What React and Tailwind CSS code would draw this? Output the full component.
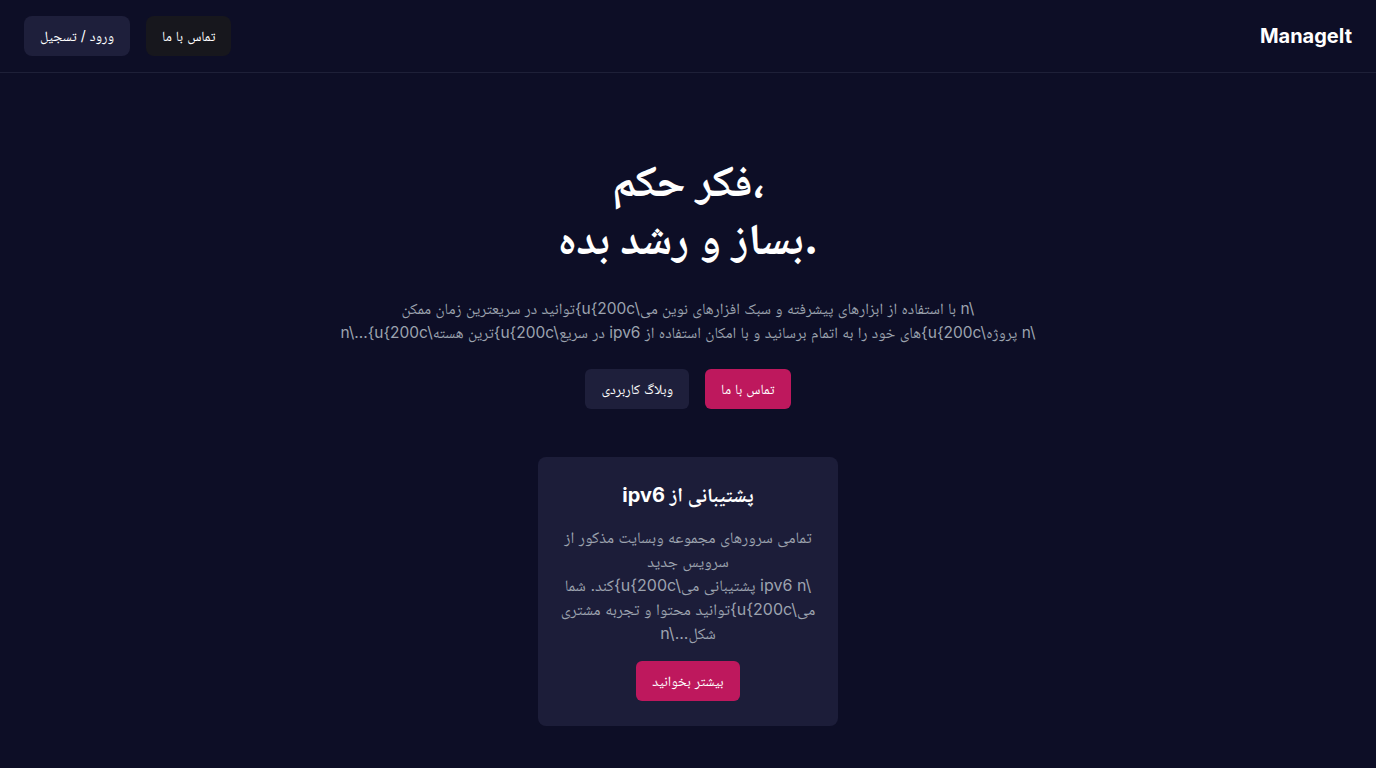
import React from "react";

const R = ({ children }) => <bdi dir="rtl">{children}</bdi>;
const L = ({ children }) => <bdi dir="ltr">{children}</bdi>;
const ESC = "{u{200c\\";

export default function App() {
  return (
    <div
      dir="rtl"
      className="min-h-screen bg-[#0d0e26] text-white font-['Inter','Noto_Naskh_Arabic',sans-serif]"
    >
      <header className="flex h-[73px] items-center justify-between border-b border-[#1e2038] px-6">
        <div className="text-xl font-bold">ManageIt</div>
        <div className="flex items-center gap-4">
          <button className="h-10 rounded-lg bg-[#17171d] px-4 text-sm leading-5 text-white">
            تماس با ما
          </button>
          <button className="h-10 rounded-lg bg-[#1e1f3b] px-4 text-sm leading-5 text-white">
            ورود / تسجیل
          </button>
        </div>
      </header>

      <main className="flex flex-col items-center pt-[78px] pb-10">
        <h1 dir="ltr" className="text-center text-[44px] font-bold leading-[58px]">
          <span className="block">فکر حکم،</span>
          <span className="block">بساز و رشد بده.</span>
        </h1>

        <div className="mt-[30px] text-center text-[15.5px] leading-6 text-[#9ca3af]">
          <div dir="ltr" className="whitespace-nowrap">
            <R>توانید در سریعترین زمان ممکن</R>
            <L>{ESC}</L>
            <R>با استفاده از ابزارهای پیشرفته و سبک افزارهای نوین می</R>{" "}
            <L>{"n\\"}</L>
          </div>
          <div dir="ltr" className="whitespace-nowrap">
            <L>{"n\\...{u{200c\\"}</L>
            <R>ترین هسته</R>
            <L>{ESC}</L>
            <R>در سریع</R> <L>ipv6</L>{" "}
            <R>های خود را به اتمام برسانید و با امکان استفاده از</R>
            <L>{ESC}</L>
            <R>پروژه</R> <L>{"n\\"}</L>
          </div>
        </div>

        <div className="mt-6 flex items-center gap-4">
          <button className="h-10 rounded-md bg-[#be185d] px-4 text-sm leading-5 text-white">
            تماس با ما
          </button>
          <button className="h-10 rounded-md bg-[#1e1f3b] px-4 text-sm leading-5 text-white">
            وبلاگ کاربردی
          </button>
        </div>

        <div className="mt-12 flex w-[300px] flex-col items-center rounded-lg bg-[#1c1d39] px-6 pt-6 pb-[25px]">
          <h2 className="text-xl font-bold leading-7">پشتیبانی از ipv6</h2>
          <div className="mt-4 text-center text-base leading-6 text-[#9ca3af]">
            <div dir="ltr" className="whitespace-nowrap">
              <R>تمامی سرورهای مجموعه وبسایت مذکور از</R>
            </div>
            <div dir="ltr" className="whitespace-nowrap">
              <R>سرویس جدید</R>
            </div>
            <div dir="ltr" className="whitespace-nowrap">
              <R>کند. شما</R>
              <L>{ESC}</L>
              <R>پشتیبانی می</R> <L>ipv6</L> <L>{"n\\"}</L>
            </div>
            <div dir="ltr" className="whitespace-nowrap">
              <R>توانید محتوا و تجربه مشتری</R>
              <L>{ESC}</L>
              <R>می</R>
            </div>
            <div dir="ltr" className="whitespace-nowrap">
              <L>{"n\\..."}</L>
              <R>شکل</R>
            </div>
          </div>
          <button className="mt-4 h-10 rounded-md bg-[#be185d] px-4 text-sm leading-5 text-white">
            بیشتر بخوانید
          </button>
        </div>
      </main>
    </div>
  );
}
